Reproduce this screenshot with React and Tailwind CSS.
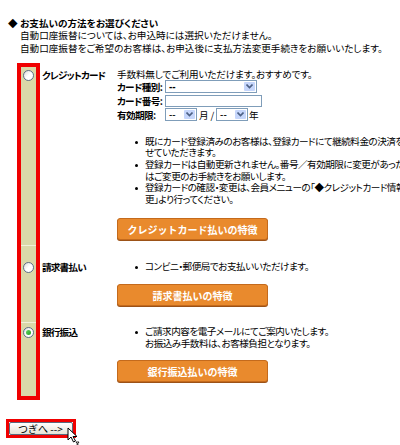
import clsx from "clsx";

const jp = "font-['Noto_Sans_CJK_JP','Noto_Sans_CJK_SC',sans-serif] [font-feature-settings:'palt']";

function Radio({ checked }) {
  return (
    <span className="flex h-[11px] w-[11px] items-center justify-center rounded-full border border-[#5d6f88] bg-gradient-to-br from-[#dcdcd6] via-white to-white">
      {checked && <span className="h-[5px] w-[5px] rounded-full bg-gradient-to-br from-[#5fd35f] to-[#21a121]" />}
    </span>
  );
}

function Select({ w, children }) {
  return (
    <div className={clsx("flex h-[13px] shrink-0 items-stretch border border-[#7f9db9] bg-white", w)}>
      <span className="flex-1 pl-[3px] text-[10px] leading-[11px] font-['Liberation_Sans',sans-serif] tracking-normal">{children}</span>
      <span className="m-[1px] flex w-[11px] items-center justify-center rounded-[1px] bg-[#c6d6fb]">
        <svg width="7" height="5" viewBox="0 0 7 5">
          <path d="M0.5 0.5 L3.5 3.5 L6.5 0.5" fill="none" stroke="#4d6185" strokeWidth="1.6" />
        </svg>
      </span>
    </div>
  );
}

function Bullet({ lines }) {
  return (
    <div className="flex">
      <span className="ml-[18px] mr-[7px] mt-[5px] h-[3px] w-[3px] shrink-0 rounded-full bg-black" />
      <div className="whitespace-nowrap tracking-[-0.5px]">
        {lines.map((l) => (
          <div key={l} className="h-[11.6px] leading-[11.6px]">{l}</div>
        ))}
      </div>
    </div>
  );
}

function OrangeButton({ children, mt }) {
  return (
    <div className={clsx("flex h-[22px] w-[151px] items-center justify-center rounded-[3px] border border-[#c46a1c] bg-[#e98a2d] shadow-[0_1px_0_#9c5217] text-[10px] font-bold tracking-normal text-white [font-feature-settings:normal]", mt)}>
      {children}
    </div>
  );
}

function Row({ first, last, checked, label, pad, radioMt, children }) {
  return (
    <div className="flex">
      <div
        className={clsx(
          "flex w-[23px] shrink-0 flex-col border-x-4 border-[#f00000]",
          first && "border-t-4",
          last && "border-b-4"
        )}
      >
        <div className={clsx("flex flex-1 justify-center bg-[#dad8a8]", !first && "border-t border-[#f1f0da]")}>
          <div className={radioMt}>
            <Radio checked={checked} />
          </div>
        </div>
      </div>
      <div className={clsx("flex flex-1 pl-[2px]", pad)}>
        <div className={clsx("w-[75px] shrink-0 whitespace-nowrap font-bold leading-[12px] tracking-[-0.8px]", first && "mt-[1px]")}>{label}</div>
        <div className="min-w-0 flex-1 tracking-[-0.15px]">{children}</div>
      </div>
    </div>
  );
}

export default function App() {
  return (
    <div className={clsx("h-[445px] w-[400px] overflow-hidden bg-white pl-[8px] pt-[17px] text-[9.6px] text-black", jp)}>
      <div className="leading-[12.3px]">
        <div className="flex font-bold">
          <span className="w-[12px]">◆</span>
          <span>お支払いの方法をお選びください</span>
        </div>
        <div className="pl-[12px]">自動口座振替については、お申込時には選択いただけません。</div>
        <div className="pl-[12px] whitespace-nowrap">自動口座振替をご希望のお客様は、お申込後に支払方法変更手続きをお願いいたします。</div>
      </div>

      <div className="ml-[9px] mt-[9px] w-[520px]">
        <Row first label="クレジットカード" pad="pt-[5px] pb-[5px]" radioMt="mt-[3px]">
          <div className="h-[12px] leading-[12px]">手数料無しでご利用いただけます。おすすめです。</div>
          <div className="grid grid-cols-[48px_auto] grid-rows-[14px_14px_14px] items-center font-bold">
            <div className="whitespace-nowrap tracking-[-0.6px]">カード種別:</div>
            <Select w="w-[92px]">--</Select>
            <div className="whitespace-nowrap tracking-[-0.6px]">カード番号:</div>
            <div className="h-[12px] w-[97px] border border-[#7f9db9] bg-white" />
            <div className="whitespace-nowrap tracking-[-0.6px]">有効期限:</div>
            <div className="flex items-center font-normal">
              <Select w="w-[32px]">--</Select>
              <span className="px-[2px]">月 /</span>
              <Select w="w-[32px]">--</Select>
              <span className="pl-[1px]">年</span>
            </div>
          </div>
          <div className="mt-[14px]">
            <Bullet lines={["既にカード登録済みのお客様は、登録カードにて継続料金の決済を行わ", "せていただきます。"]} />
            <Bullet lines={["登録カードは自動更新されません。番号／有効期限に変更があった場合", "はご変更のお手続きをお願いします。"]} />
            <Bullet lines={["登録カードの確認・変更は、会員メニューの「◆クレジットカード情報の変", "更」より行ってください。"]} />
          </div>
          <OrangeButton mt="mt-[13px]">クレジットカード払いの特徴</OrangeButton>
        </Row>

        <Row label="請求書払い" pad="pt-[16px] pb-[16px]" radioMt="mt-[16px]">
          <Bullet lines={["コンビニ・郵便局でお支払いいただけます。"]} />
          <OrangeButton mt="mt-[11px]">請求書払いの特徴</OrangeButton>
        </Row>

        <Row last checked label="銀行振込" pad="pt-[4px] pb-[18px]" radioMt="mt-[4px]">
          <Bullet lines={["ご請求内容を電子メールにてご案内いたします。", "お振込み手数料は、お客様負担となります。"]} />
          <OrangeButton mt="mt-[11px]">銀行振込払いの特徴</OrangeButton>
        </Row>
      </div>

      <div className="relative -ml-[2px] mt-[19px] w-[70px] border-[3px] border-[#f00000]">
        <div className="flex h-[13px] items-center rounded-[2px] border border-[#5a6a7e] bg-gradient-to-b from-white to-[#e6e3d6] pl-[8px] text-[10px] leading-[11px] [font-feature-settings:normal]">
          つぎへ --&gt;
        </div>
        <svg className="absolute left-[58px] top-[5px]" width="14" height="20" viewBox="0 0 14 20">
          <path d="M1 1 L1 13 L4 10 L6.5 15 L8.5 14 L6 9.5 L10 9.5 Z" fill="white" stroke="black" strokeWidth="1" />
          <path d="M9 15 L12 15 L10.5 17 L12 19 L9 19 L10.5 17 Z" fill="white" stroke="black" strokeWidth="0.8" />
        </svg>
      </div>
    </div>
  );
}
